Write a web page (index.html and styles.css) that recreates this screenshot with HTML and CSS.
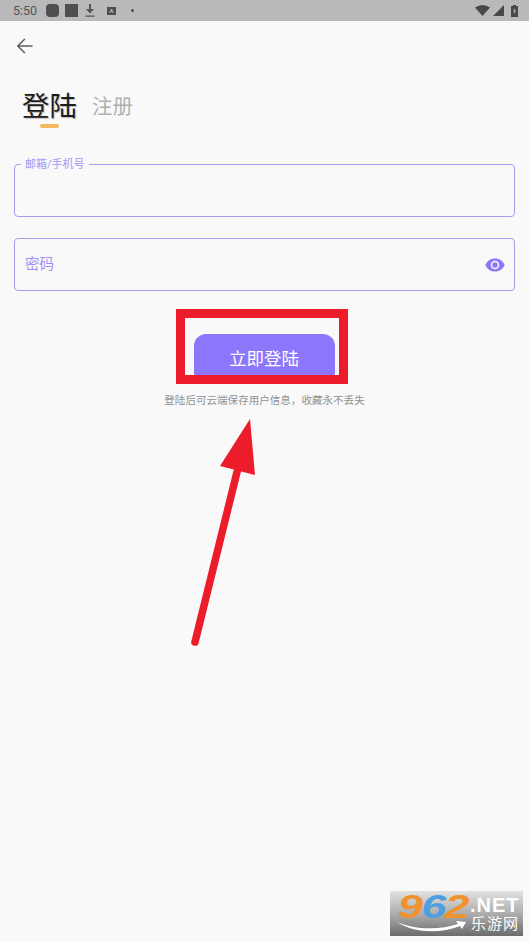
FILE: index.html
```html
<!DOCTYPE html>
<html lang="zh-CN">
<head>
    <meta charset="UTF-8">
    <meta name="viewport" content="width=device-width, initial-scale=1.0">
    <title>登陆</title>
    <link rel="stylesheet" href="styles.css">
</head>
<body>
    <!-- Status bar -->
    <div class="status-bar">
        <span class="status-time">5:50</span>
        <span class="status-app round"></span>
        <span class="status-app"></span>
        <svg class="status-icon" width="12" height="14" viewBox="0 0 12 14">
            <path d="M5 0h2v5h3L6 9.500 2 5h3z M1.500 11.500h9v1.200h-9z" fill="#555"/>
        </svg>
        <span class="status-a">A</span>
        <span class="status-dot"></span>
        <span class="status-right">
            <svg width="15" height="11" viewBox="0 0 15 11"><path d="M0 2.500Q7.500 -2.500 15 2.500L7.500 11z" fill="#484848"/></svg>
            <svg width="11" height="11" viewBox="0 0 11 11"><path d="M11 0V11H0z" fill="#484848"/></svg>
            <svg class="battery" width="7" height="12" viewBox="0 0 7 12"><path d="M2 0h3v1h2v11H0V1h2z" fill="#484848"/><path d="M4 2.500 2 6.500h1.300L3 9.500 5 5.500H3.700z" fill="#b9b9b9"/></svg>
        </span>
    </div>

    <div class="toolbar">
        <svg width="18" height="18" viewBox="0 0 18 18" fill="none" stroke="#5f5f5f" stroke-width="1.500">
            <path d="M16.500 9H2M8.800 2 1.800 9l7 7"/>
        </svg>
    </div>

    <div class="tabs">
        <div class="tab-active">
            <span>登陆</span>
            <div class="tab-line"></div>
        </div>
        <span class="tab">注册</span>
    </div>

    <div class="form">
        <div class="field">
            <span class="field-label">邮箱/手机号</span>
        </div>
        <div class="field">
            <span class="field-hint">密码</span>
            <svg class="eye" width="20" height="14" viewBox="0 0 20 14">
                <path d="M10 0.500C5.500 0.500 1.800 3.200 0.300 7c1.500 3.800 5.200 6.500 9.700 6.500s8.200-2.700 9.700-6.500C18.200 3.200 14.500 0.500 10 0.500z" fill="#8c76fb"/>
                <circle cx="10" cy="7" r="4.300" fill="#f9f9f9"/>
                <circle cx="10" cy="7" r="2.700" fill="#8c76fb"/>
            </svg>
        </div>
        <button class="login-btn">立即登陆</button>
        <p class="login-tip">登陆后可云端保存用户信息，收藏永不丢失</p>
    </div>

    <!-- Red annotation over the page -->
    <div class="mark-box"></div>
    <svg class="mark-arrow" width="529" height="942" viewBox="0 0 529 942">
        <path d="M195 642 238 468" stroke="#ed1c2a" stroke-width="7.500" stroke-linecap="round" fill="none"/>
        <path d="M250 419 255 475 220 466z" fill="#ed1c2a"/>
    </svg>

    <!-- Watermark -->
    <div class="watermark">
        <svg class="wm-swoosh" width="133" height="45" viewBox="0 0 133 45">
            <path d="M7 31C25 39 50 39 68 33L66 30 76 31 72 38 70 35C50 43 24 42 7 31z" fill="#fff"/>
        </svg>
        <div class="wm-num"><span class="wm-orange">9</span><span class="wm-blue">6</span><span class="wm-orange">2</span></div>
        <div class="wm-side">
            <div class="wm-net">.NET</div>
            <div class="wm-cn">乐游网</div>
        </div>
    </div>
</body>
</html>
```

FILE: styles.css
```css
html, body {
    margin: 0;
    padding: 0;
}

body {
    position: relative;
    width: 529px;
    height: 942px;
    overflow: hidden;
    background-color: #f9f9f9;
    font-family: "Roboto", "Noto Sans CJK SC", sans-serif;
}

/* Status bar */
.status-bar {
    display: flex;
    align-items: center;
    height: 21px;
    padding: 0 11px 0 13px;
    background-color: #b9b9b9;
}

.status-time {
    width: 33px;
    font-size: 12.500px;
    color: #555;
}

.status-app {
    width: 13px;
    height: 13px;
    margin-right: 6px;
    background-color: #4f4f4f;
}

.status-app.round {
    border-radius: 4px;
}

.status-icon {
    margin: 0 8px 0 0;
}

.status-a {
    width: 9px;
    height: 8px;
    margin-left: 3px;
    background-color: #4f4f4f;
    color: #b9b9b9;
    font-size: 6px;
    font-weight: 700;
    line-height: 8px;
    text-align: center;
}

.status-dot {
    width: 3px;
    height: 3px;
    margin-left: 15px;
    border-radius: 50%;
    background-color: #4f4f4f;
}

.status-right {
    display: flex;
    align-items: center;
    gap: 3px;
    margin-left: auto;
}

.battery {
    margin-left: 4px;
}

.toolbar {
    display: flex;
    align-items: center;
    height: 50px;
    padding-left: 16px;
}

/* Tabs */
.tabs {
    display: flex;
    align-items: flex-start;
    padding: 19px 0 0 22px;
    height: 73px;
    box-sizing: border-box;
}

.tab-active {
    position: relative;
    font-size: 27.500px;
    line-height: 34px;
    color: #1c1c1c;
    text-shadow: 1px 1px 1px #bbb;
}

.tab-line {
    width: 19px;
    height: 4px;
    margin: 0 0 0 18px;
    border-radius: 2px;
    background-color: #f2b95e;
}

.tab {
    margin: 0 0 0 15px;
    font-size: 20.500px;
    line-height: 34px;
    color: #b0b0b0;
}

/* Form */
.form {
    display: flex;
    flex-direction: column;
    padding: 0 14px;
    margin-top: 20px;
}

.field {
    position: relative;
    display: flex;
    align-items: center;
    justify-content: space-between;
    height: 53px;
    padding: 0 10px;
    margin-bottom: 21px;
    box-sizing: border-box;
    border: 1px solid #a79bec;
    border-radius: 4px;
}

.field-label {
    position: absolute;
    top: -7px;
    left: 6px;
    padding: 0 4px;
    background-color: #f9f9f9;
    font-size: 11px;
    line-height: 13px;
    color: #a495f5;
}

.field-hint {
    padding-bottom: 4px;
    font-size: 14.500px;
    color: #a08ff5;
}

.eye {
    margin-right: -1px;
}

.login-btn {
    align-self: center;
    width: 141px;
    height: 50px;
    margin: 22px 0 0 -1px;
    padding: 0 0 4px;
    border: none;
    border-radius: 12px;
    background-color: #8c76fb;
    color: #fff;
    font-family: inherit;
    font-size: 17.500px;
}

.login-tip {
    margin: 10px 0 0;
    font-size: 10.550px;
    line-height: 14px;
    color: #929292;
    text-align: center;
}

/* Annotation */
.mark-box {
    position: absolute;
    top: 309px;
    left: 176px;
    width: 154px;
    height: 57px;
    border: 9px solid #ed1c2a;
}

.mark-arrow {
    position: absolute;
    top: 0;
    left: 0;
}

/* Watermark */
.watermark {
    position: absolute;
    top: 891px;
    left: 390px;
    display: flex;
    align-items: center;
    width: 133px;
    height: 45px;
    padding-left: 8px;
    box-sizing: border-box;
    background: linear-gradient(#e2e2e2, #a8a8a8 55%, #6c6c6c);
}

.wm-swoosh {
    position: absolute;
    top: 0;
    left: 0;
}

.wm-num {
    position: relative;
    width: 72px;
    margin-top: -14px;
    font-family: "Liberation Sans", sans-serif;
    font-size: 33px;
    font-weight: 700;
    font-style: italic;
    line-height: 30px;
    letter-spacing: -1px;
    transform: scaleX(1.35);
    transform-origin: left;
}

.wm-orange {
    color: #f0922e;
}

.wm-blue {
    color: #4f9fe0;
}

.wm-side {
    position: relative;
    display: flex;
    flex-direction: column;
    color: #fff;
}

.wm-net {
    font-family: "Liberation Sans", sans-serif;
    font-size: 20px;
    font-weight: 700;
    line-height: 21px;
    letter-spacing: 1px;
}

.wm-cn {
    margin-left: 1px;
    font-size: 15px;
    line-height: 17px;
    letter-spacing: 1px;
}
```
